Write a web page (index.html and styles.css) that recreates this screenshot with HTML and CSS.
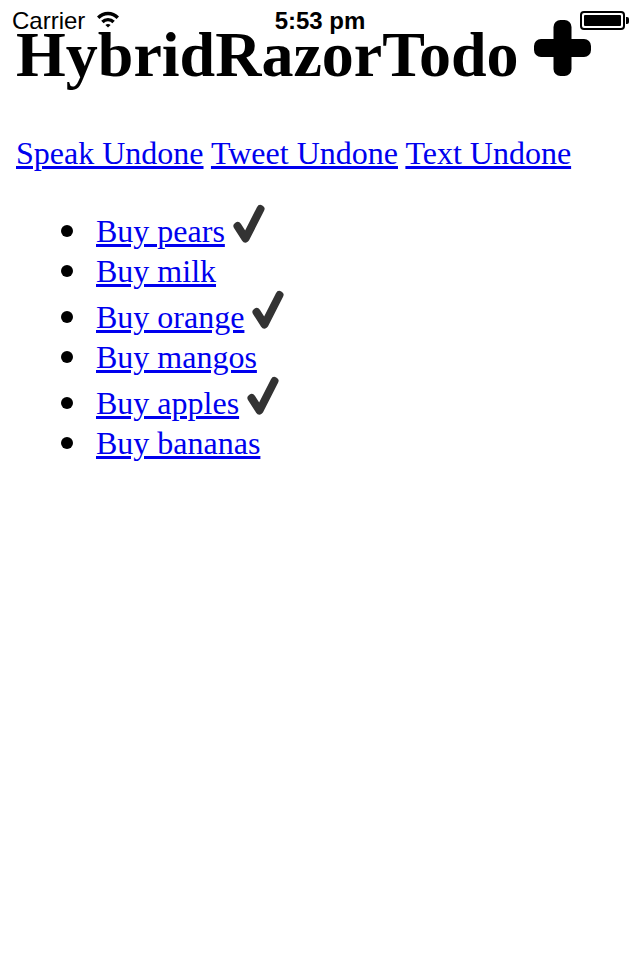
FILE: index.html
```html
<!DOCTYPE html>
<html>
<head>
<meta charset="utf-8">
<link rel="stylesheet" href="styles.css">
</head>
<body>
<div class="statusbar">
  <div class="sb-left">Carrier
    <svg class="wifi" width="24" height="18" viewBox="0 0 24 18">
      <path d="M1 6.5 A15 15 0 0 1 23 6.5 L20.6 9 A11.5 11.5 0 0 0 3.4 9 Z" fill="#000"/>
      <path d="M5.2 10.8 A9.5 9.5 0 0 1 18.8 10.8 L16.4 13.2 A6 6 0 0 0 7.6 13.2 Z" fill="#000"/>
      <path d="M9.4 15 A4 4 0 0 1 14.6 15 L12 17.6 Z" fill="#000"/>
    </svg>
  </div>
  <div class="sb-time">5:53 pm</div>
  <div class="battery"><div class="battery-fill"></div><div class="battery-nub"></div></div>
</div>
<h1 class="title">HybridRazorTodo<svg class="plus" width="57" height="56" viewBox="0 0 57 56"><rect x="19.5" y="0" width="18" height="56" rx="7" fill="#000"/><rect x="0" y="19" width="57" height="18" rx="7" fill="#000"/></svg></h1>
<p class="actions"><a href="#">Speak Undone</a> <a href="#">Tweet Undone</a> <a href="#">Text Undone</a></p>
<ul class="todos">
  <li><a href="#">Buy pears</a> <svg class="check" width="34" height="50" viewBox="0 0 34 50"><path d="M4.5 23 L12.5 35.5 L27.5 6" fill="none" stroke="#333" stroke-width="8" stroke-linecap="round" stroke-linejoin="round"/></svg></li>
  <li><a href="#">Buy milk</a></li>
  <li><a href="#">Buy orange</a> <svg class="check" width="34" height="50" viewBox="0 0 34 50"><path d="M4.5 23 L12.5 35.5 L27.5 6" fill="none" stroke="#333" stroke-width="8" stroke-linecap="round" stroke-linejoin="round"/></svg></li>
  <li><a href="#">Buy mangos</a></li>
  <li><a href="#">Buy apples</a> <svg class="check" width="34" height="50" viewBox="0 0 34 50"><path d="M4.5 23 L12.5 35.5 L27.5 6" fill="none" stroke="#333" stroke-width="8" stroke-linecap="round" stroke-linejoin="round"/></svg></li>
  <li><a href="#">Buy bananas</a></li>
</ul>
</body>
</html>
```
FILE: styles.css
```css
html, body {
  background: #fff;
}
body {
  margin: 0;
  padding: 0 16px;
  font-family: "Liberation Serif", "Times New Roman", serif;
  font-size: 32px;
  color: #000;
  position: relative;
}
a {
  color: #0000ee;
}
.statusbar {
  position: absolute;
  top: 0;
  left: 0;
  width: 640px;
  height: 40px;
  font-family: "Liberation Sans", Arial, sans-serif;
  font-size: 24px;
  z-index: 2;
}
.sb-left {
  position: absolute;
  left: 12px;
  top: 7px;
  line-height: 28px;
  display: flex;
  align-items: center;
  gap: 11px;
}
.wifi {
  display: block;
  margin-top: -4px;
}
.sb-time {
  position: absolute;
  left: 0;
  right: 0;
  top: 7px;
  text-align: center;
  font-weight: bold;
  line-height: 28px;
}
.battery {
  position: absolute;
  left: 580px;
  top: 11px;
  width: 45px;
  height: 19px;
  box-sizing: border-box;
  border: 2px solid #000;
  border-radius: 4px;
  padding: 2px;
}
.battery-fill {
  width: 100%;
  height: 100%;
  background: #000;
  border-radius: 1px;
}
.battery-nub {
  position: absolute;
  right: -6px;
  top: 4px;
  width: 3px;
  height: 7px;
  background: #000;
  border-radius: 0 2px 2px 0;
}
.title {
  margin: 0 0 43px;
  padding-top: 18px;
  font-size: 64px;
  font-weight: bold;
  line-height: 74px;
}
.plus {
  vertical-align: 0;
  margin-left: 15px;
}
.actions {
  margin: 0;
  line-height: 36px;
}
.todos {
  margin: 32px 0 0;
  padding-left: 80px;
  list-style: none;
}
.todos li {
  line-height: 36px;
}
.todos li::before {
  content: "";
  display: inline-block;
  width: 12px;
  height: 12px;
  border-radius: 50%;
  background: #000;
  margin-left: -35px;
  margin-right: 23px;
  vertical-align: 5px;
}
.check {
  vertical-align: -11px;
}
```
